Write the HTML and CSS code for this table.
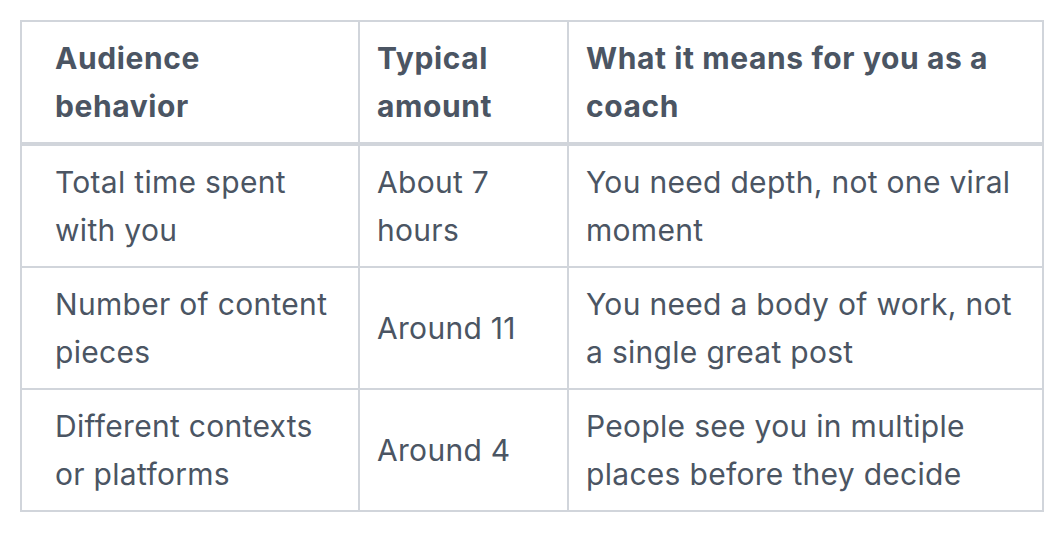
FILE: index.html
```html
<!DOCTYPE html>
<html>
<head>
<meta charset="utf-8">
<link rel="stylesheet" href="styles.css">
</head>
<body>
<table class="data-table">
  <colgroup>
    <col class="col-a">
    <col class="col-b">
    <col class="col-c">
  </colgroup>
  <thead>
    <tr>
      <th>Audience behavior</th>
      <th>Typical amount</th>
      <th>What it means for you as a coach</th>
    </tr>
  </thead>
  <tbody>
    <tr>
      <td>Total time spent with you</td>
      <td>About 7 hours</td>
      <td>You need depth, not one viral moment</td>
    </tr>
    <tr>
      <td>Number of content pieces</td>
      <td>Around 11</td>
      <td>You need a body of work, not a single great post</td>
    </tr>
    <tr>
      <td>Different contexts or platforms</td>
      <td>Around 4</td>
      <td>People see you in multiple places before they decide</td>
    </tr>
  </tbody>
</table>
</body>
</html>
```

FILE: styles.css
```css
html, body {
  margin: 0;
  padding: 0;
  background: #ffffff;
}
body {
  padding: 20px;
  font-family: Inter, "Noto Sans", sans-serif;
  color: #4b5563;
}
.data-table {
  border-collapse: separate;
  border-spacing: 0;
  table-layout: fixed;
  width: 1024px;
  border-top: 2px solid #d1d5db;
  border-left: 2px solid #d1d5db;
}
.col-a { width: 338px; }
.col-b { width: 209px; }
.col-c { width: 475px; }
.data-table th,
.data-table td {
  box-sizing: border-box;
  text-align: left;
  vertical-align: middle;
  font-size: 30px;
  line-height: 48px;
  padding: 12px 17px;
  border-right: 2px solid #d1d5db;
  border-bottom: 2px solid #d1d5db;
}
.data-table th {
  font-weight: 700;
  letter-spacing: 0.6px;
  border-bottom-width: 4px;
}
.data-table td {
  font-weight: 400;
  letter-spacing: 0.3px;
}
.data-table th:first-child,
.data-table td:first-child {
  padding-left: 33px;
}
```
